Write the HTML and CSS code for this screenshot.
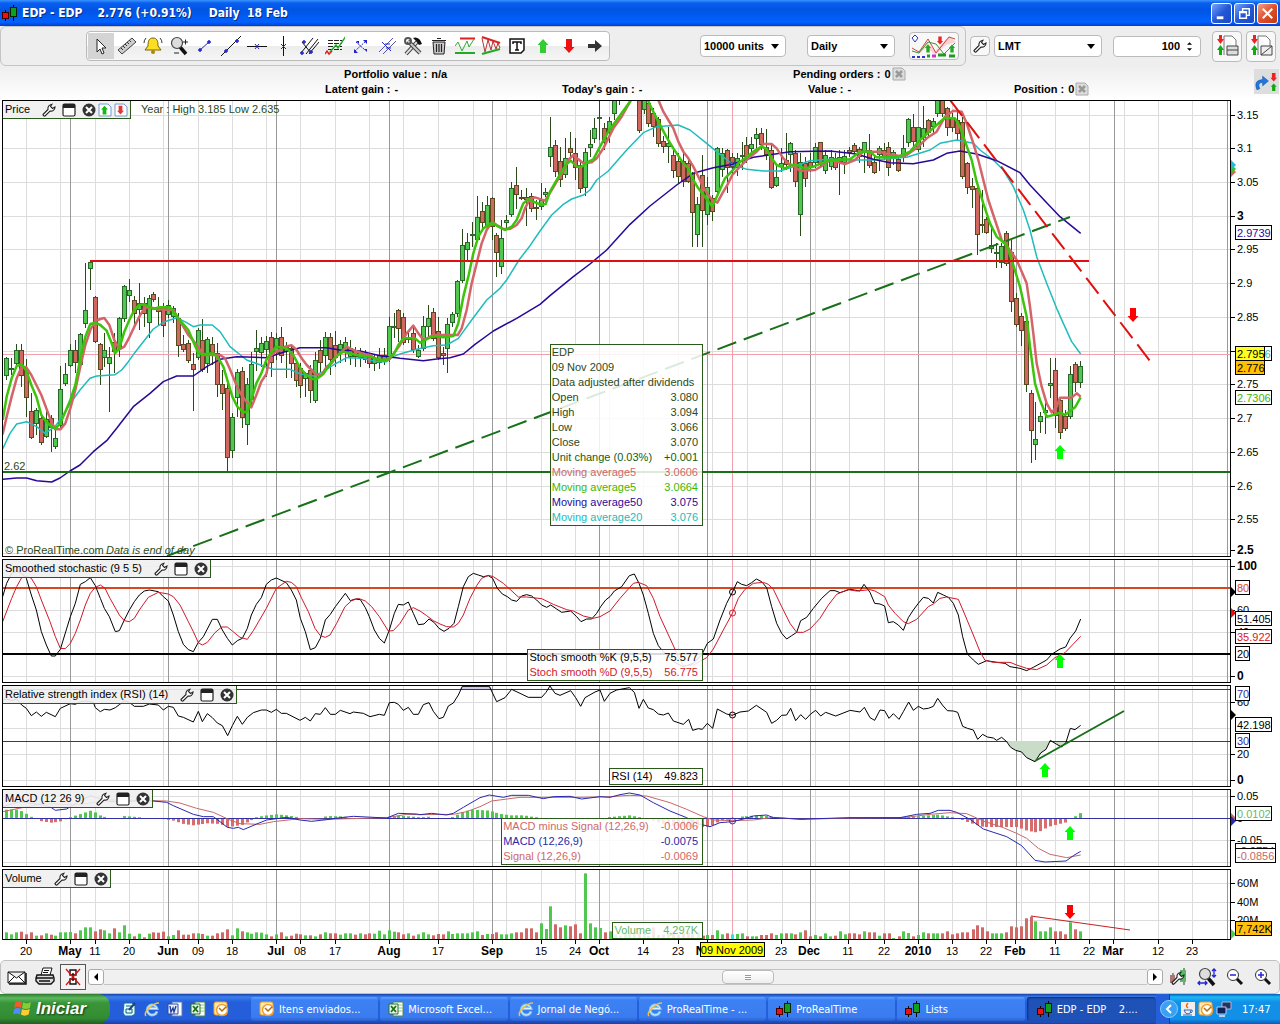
FILE: index.html
```html
<!DOCTYPE html>
<html lang="en">
<head>
<meta charset="utf-8">
<title>EDP - EDP 2.776 (+0.91%) Daily 18 Feb</title>
<link rel="stylesheet" href="styles.css">
</head>
<body>
<svg class="sprite" aria-hidden="true">
  <symbol id="logo" viewBox="0 0 16 16"><path d="M3.500 5v11M11.500 0v16" stroke="#000"/><rect x=".5" y="7.500" width="6" height="6" fill="#f01010" stroke="#400"/><rect x="8.500" y="2.500" width="6" height="9" fill="#10a020" stroke="#020"/></symbol>
  <symbol id="wrench" viewBox="0 0 14 14"><path d="M1 11.500 6 6.500C5.500 4 7 1.500 10 1.200L8.500 3.500 10.500 5.500 13 4C13 7 10.500 8.600 8 8L3 13Q1.500 13.500 1 11.500Z" fill="#fff" stroke="#222" stroke-width="1.100"/></symbol>
  <symbol id="window" viewBox="0 0 14 14"><rect x="1" y="1" width="12" height="12" rx="1.500" fill="#fff" stroke="#222" stroke-width="1.200"/><path d="M1 1h12v4H1z" fill="#222"/></symbol>
  <symbol id="close" viewBox="0 0 14 14"><circle cx="7" cy="7" r="6.500" fill="#333"/><path d="m4 4 6 6m0-6-6 6" stroke="#fff" stroke-width="2"/></symbol>
  <symbol id="up" viewBox="0 0 12 16"><path d="M6 1 11.500 7H9v8H3V7H.5z"/></symbol>
  <symbol id="down" viewBox="0 0 12 16"><path d="M6 15 11.500 9H9V1H3v8H.5z"/></symbol>
  <symbol id="graybox" viewBox="0 0 14 14"><path d="M1 1h9l3 3v9H1z" fill="#ddd" stroke="#aaa"/><path d="m4 4 6 6m0-6-6 6" stroke="#999" stroke-width="2.500"/></symbol>
  <symbol id="ie" viewBox="0 0 16 16"><path d="M13 10.500A5 5 0 1 1 13 7.500H4" fill="none" stroke="#7ac4f8" stroke-width="2.800"/><path d="M13 10.500A5 5 0 1 1 13 7.500H4" fill="none" stroke="#d8f0ff" stroke-width="1"/><path d="M2 15C-1 12 8 2 15 2" fill="none" stroke="#f0c040" stroke-width="1.500"/></symbol>
  <symbol id="excel" viewBox="0 0 16 16"><path d="M5 1h10v14H5z" fill="#fff" stroke="#4a8a4a"/><path d="M9 4h5M9 7h5M9 10h5" stroke="#8c8"/><path d="M1 3h9v10H1z" fill="#e8f4e8" stroke="#287028"/><path d="m3 5 5 6m0-6-5 6" stroke="#187018" stroke-width="1.800"/></symbol>
  <symbol id="outlook" viewBox="0 0 16 16"><rect x="1" y="1" width="13" height="13" rx="2" fill="#ffe9b0" stroke="#f0a030"/><circle cx="9" cy="9" r="5.500" fill="#fff" stroke="#f0a030" stroke-width="1.500"/><path d="m6 7 3 3 4-4" fill="none" stroke="#b07010" stroke-width="1.500"/></symbol>
  <symbol id="word" viewBox="0 0 16 16"><path d="M5 1h10v14H5z" fill="#fff" stroke="#5a7ac0"/><path d="M1 3h10v10H1z" fill="#e8eefc" stroke="#2a4a9a"/><path d="m3 5 1 6 2-4 1 4 2-6" fill="none" stroke="#2040a0" stroke-width="1.400"/></symbol>
  <symbol id="lens" viewBox="0 0 20 20"><path d="m11 11 6 7" stroke="#111" stroke-width="3.500"/><circle cx="8" cy="7" r="5.500" fill="#ddd" stroke="#444" stroke-width="1.200"/></symbol>
  <symbol id="page-orders" viewBox="0 0 24 24"><path d="M9 2h8l4 4v8M9 2v19" fill="#fff" stroke="#777"/><path d="M4 1h3v4h2l-3.500 5L2 5h2z" fill="#e22"/><path d="M4 21h3v-5h2l-3.500-5L2 16h2z" fill="#1a1"/></symbol>
</svg>

<header class="titlebar">
  <svg class="i16"><use href="#logo"/></svg>
  <h1>EDP - EDP<span class="quote">2.776 (+0.91%)</span><span class="period">Daily&nbsp; 18 Feb</span></h1>
  <div class="window-controls">
    <button aria-label="Minimise"><svg viewBox="0 0 20 20"><path d="M5 14.500h7" stroke="#fff" stroke-width="3"/></svg></button>
    <button aria-label="Restore"><svg viewBox="0 0 20 20"><path d="M8 8V5h7v7h-3M5 8h7v7H5zM5 9h7" fill="none" stroke="#fff" stroke-width="1.500"/></svg></button>
    <button class="quit" aria-label="Close"><svg viewBox="0 0 20 20"><path d="m5 5 10 10m0-10L5 15" stroke="#fff" stroke-width="2.200"/></svg></button>
  </div>
</header>

<div class="toolbar">
  <div class="tool-group">
    <div class="tools">
      <button class="pressed" aria-label="Select"><svg viewBox="0 0 20 20"><path d="M6 3v13l3-3 2 5 2-1-2-5h4z" fill="#fff" stroke="#222"/></svg></button>
      <button aria-label="Ruler"><svg viewBox="0 0 20 20"><path d="m1 14 14-12 4 4L5 18z" fill="#ccc" stroke="#444"/><path d="m4 12 2 2m0-4 2 2m0-4 2 2m0-4 2 2m0-4 2 2" stroke="#333"/></svg></button>
      <button aria-label="Alert"><svg viewBox="0 0 20 20"><path d="M10 2c4 0 5 3 5 8l3 4H2l3-4c0-5 1-8 5-8z" fill="#fd2" stroke="#760"/><circle cx="10" cy="16" r="2" fill="#a80"/><path d="M3 2Q1 4 1 7M17 2q2 2 2 5" fill="none" stroke="#333"/></svg></button>
      <button aria-label="Zoom"><svg viewBox="0 0 20 20"><use href="#lens"/><path d="M14 6h5m-2.500-2.500v5M5 17h5" stroke="#222"/></svg></button>
      <button aria-label="Segment"><svg viewBox="0 0 20 20"><path d="m5 14 9-8" stroke="#22c"/><path d="M3 14h4m-2-2v4m7-10h4m-2-2v4" stroke="#22c" stroke-width="1.500"/></svg></button>
      <button aria-label="Line"><svg viewBox="0 0 20 20"><path d="M0 20 20 0" stroke="#111"/><path d="M3 15h4m-2-2v4m9-12h4m-2-2v4" stroke="#22c" stroke-width="1.500"/></svg></button>
      <button aria-label="Horizontal line"><svg viewBox="0 0 20 20"><path d="M0 10.500h20" stroke="#111"/><path d="m8 8 4 5m0-5-4 5" stroke="#22c"/></svg></button>
      <button aria-label="Vertical line"><svg viewBox="0 0 20 20"><path d="M10.500 0v20" stroke="#111"/><path d="m8 8 5 5m0-5-5 5" stroke="#22c"/></svg></button>
      <button aria-label="Pitchfork"><svg viewBox="0 0 20 20"><path d="M2 17 14 2M7 18 19 3M10 18 20 6M3 6l9 11" stroke="#111"/><path d="M1 17h4m-2-2v4m7-3h4m-2-2v4M3 6h4M5 4v4" stroke="#22c" stroke-width="1.500"/></svg></button>
      <button aria-label="Fibonacci"><svg viewBox="0 0 20 20"><path d="M3 4.500h14M3 7.500h14M3 10.500h14M3 13.500h14" stroke="#222" stroke-dasharray="5 1"/><path d="M5 16 11 9l2 3 8-12" fill="none" stroke="#2a2" stroke-width="1.500"/><path d="m0 18 2-3 2 3 3-3" fill="none" stroke="#d22" stroke-width="1.500"/></svg></button>
      <button aria-label="Move points"><svg viewBox="0 0 20 20"><path d="m5 6 9 8M4 15 15 5" stroke="#22c" stroke-dasharray="2 1"/><path d="M3 13v4h4zM12 4h4v4zM5 5h3v3zm8 8h3v3z" fill="#22c"/></svg></button>
      <button aria-label="Parallel lines"><svg viewBox="0 0 20 20"><path d="M2 16 16 2M6 18 19 5" stroke="#55a"/><path d="m5 6 9 9m-6-7h5M9 12h5" stroke="#22c"/></svg></button>
      <button aria-label="Tools"><svg viewBox="0 0 20 20"><path d="m3 18 11-12" stroke="#333" stroke-width="4"/><path d="m3 18 11-12" stroke="#ddd" stroke-width="2"/><path d="M10 2q6-2 9 6l-3 1-3-4z" fill="#111"/><path d="m5 5 12 12" stroke="#444" stroke-width="4"/><path d="m5 5 12 12" stroke="#ccc" stroke-width="2"/><circle cx="5" cy="5" r="3" fill="none" stroke="#555" stroke-width="2"/></svg></button>
      <button aria-label="Delete"><svg viewBox="0 0 20 20"><path d="M4 6h12l-1 12H5z" fill="#ccc" stroke="#222"/><path d="M3 4.500h14M8 2.500h4M7.500 8v8m2.500-8v8m2.500-8v8" stroke="#222" stroke-width="1.200"/></svg></button>
      <button aria-label="Support and resistance"><svg viewBox="0 0 20 20"><path d="M5 2.500h15" stroke="#d22" stroke-width="2"/><path d="M0 17h20" stroke="#2a2" stroke-width="2"/><path d="m0 10 3-4 4 9 5-10 2 6 5-8" fill="none" stroke="#3a3"/></svg></button>
      <button aria-label="Triangle patterns"><svg viewBox="0 0 20 20"><path d="m1 1 18 6" stroke="#d22" stroke-width="2"/><path d="m1 18 18-5" stroke="#2a2" stroke-width="2"/><path d="m1 2 3 14 3-12 3 10 2-9 3 8 2-6 2 5" fill="none" stroke="#b33"/></svg></button>
      <button aria-label="Text"><svg viewBox="0 0 20 20"><path d="M3 3h14v11l-3 3H3z" fill="#fff" stroke="#111" stroke-width="1.500"/><path d="M6 8V6h8v2M10 6v8M8 14h4" fill="none" stroke="#111" stroke-width="1.500"/></svg></button>
      <button aria-label="Up arrow"><svg viewBox="0 0 20 20"><use href="#up" x="4" y="2" width="12" height="16" fill="#3c3"/></svg></button>
      <button aria-label="Down arrow"><svg viewBox="0 0 20 20"><use href="#down" x="4" y="2" width="12" height="16" fill="#e11"/></svg></button>
      <button aria-label="Right arrow"><svg viewBox="0 0 20 20"><path d="M3 8h7V4l7 6-7 6v-4H3z" fill="#333"/></svg></button>
    </div>
    <label class="pick units"><select aria-label="History"><option>10000 units</option></select></label>
    <label class="pick daily"><select aria-label="Timeframe"><option>Daily</option></select></label>
    <button class="framed indicators" aria-label="Indicators"><svg viewBox="0 0 46 24"><path d="M1 16 7 19 16 8l8 9L38 2l7 6-10 3-11 10-8-8-8 7z" fill="#fbb" opacity=".6"/><path d="m1 14 7 4 9-13 8 14L38 3l6 2" fill="none" stroke="#c44"/><path d="m1 17 7 2 9-11 8 2 8 10L44 9" fill="none" stroke="#393"/><path d="m4 1 3 3-3 4-3-4z" fill="#fff" stroke="#33c"/><path d="M1 23h3m2 0h3m2 0h3" stroke="#33c" stroke-width="2"/><path d="M16 22h3m8-1h8m3 1h6" stroke="#292" stroke-width="3"/><path d="M21 22h4" stroke="#c3c" stroke-width="3"/><use href="#up" x="13" y="10" width="8" height="9" fill="#2a2"/><use href="#down" x="25" y="2" width="8" height="9" fill="#e22"/><use href="#up" x="37" y="10" width="8" height="9" fill="#2a2"/></svg></button>
  </div>
  <button class="framed settings" aria-label="Order settings"><svg><use href="#wrench"/></svg></button>
  <label class="pick order"><select aria-label="Order type"><option>LMT</option></select></label>
  <label class="quantity"><input type="text" value="100" aria-label="Quantity"><svg viewBox="0 0 6 10"><path d="m0 3 3-3 3 3zM0 7l3 3 3-3z"/></svg></label>
  <button class="framed ticket" aria-label="Order list"><svg viewBox="0 0 24 24"><use href="#page-orders"/><path d="M12 12h11v9H12zM12 16h11" fill="#ddd" stroke="#444"/></svg></button>
  <button class="framed ticket" aria-label="Order by line"><svg viewBox="0 0 24 24"><use href="#page-orders"/><path d="M12 12h11v9H12zM12 21 23 12" fill="#eee" stroke="#444"/></svg></button>
</div>

<section class="account">
  <dl>
    <div class="wide"><dt>Portfolio value :</dt><dd>n/a</dd></div><div></div>
    <div><dt>Pending orders :</dt><dd>0</dd><svg class="i14"><use href="#graybox"/></svg></div><div></div>
    <div><dt>Latent gain :</dt><dd>-</dd></div><div><dt>Today's gain :</dt><dd>-</dd></div>
    <div class="mid"><dt>Value :</dt><dd>-</dd></div><div><dt>Position :</dt><dd>0</dd><svg class="i14"><use href="#graybox"/></svg></div>
  </dl>
  <button class="send" aria-label="Trade from chart"><svg viewBox="0 0 26 24"><path d="M3 20Q-1 10 9 9.500V6l6 5-6 5v-3.500q-6 0-3 6.500z" fill="#27d" stroke="#15a" stroke-width=".6"/><use href="#down" x="16" y="2" width="9" height="10" fill="#e22"/><use href="#up" x="16" y="13" width="9" height="9" fill="#1a1"/></svg></button>
</section>

<main class="charts">
  <section class="row price" data-top="100">
    <div class="plot"><svg class="draw"></svg>
      <div class="head"><h2>Price</h2><button aria-label="Settings"><svg><use href="#wrench"/></svg></button><button aria-label="Maximise"><svg><use href="#window"/></svg></button><button aria-label="Close"><svg><use href="#close"/></svg></button><button class="tight" aria-label="Buy"><svg viewBox="0 0 14 14"><path d="M1 1h9l3 3v9H1z" fill="#fff" stroke="#79c"/><use href="#up" x="2" y="2" width="9" height="10" fill="#1b1"/></svg></button><button class="tight" aria-label="Sell"><svg viewBox="0 0 14 14"><path d="M1 1h9l3 3v9H1z" fill="#fff" stroke="#79c"/><use href="#down" x="2" y="2" width="9" height="10" fill="#e33"/></svg></button></div>
      <div class="lane"><table class="tip">
        <tr><td colspan="2">EDP</td></tr><tr><td colspan="2">09 Nov 2009</td></tr><tr><td colspan="2">Data adjusted after dividends</td></tr>
        <tr><td>Open</td><td>3.080</td></tr><tr><td>High</td><td>3.094</td></tr><tr><td>Low</td><td>3.066</td></tr><tr><td>Close</td><td>3.070</td></tr>
        <tr class="green"><td>Unit change (0.03%)</td><td>+0.001</td></tr><tr class="rose"><td>Moving average5</td><td>3.0606</td></tr><tr class="lime"><td>Moving average5</td><td>3.0664</td></tr><tr class="navy"><td>Moving average50</td><td>3.075</td></tr><tr class="cyan"><td>Moving average20</td><td>3.076</td></tr>
      </table></div>
    </div><svg class="axis"></svg>
  </section>
  <section class="row stoch" data-top="559">
    <div class="plot"><svg class="draw"></svg>
      <div class="head"><h2>Smoothed stochastic (9 5 5)</h2><button aria-label="Settings"><svg><use href="#wrench"/></svg></button><button aria-label="Maximise"><svg><use href="#window"/></svg></button><button aria-label="Close"><svg><use href="#close"/></svg></button></div>
      <div class="lane"><table class="tip"><tr class="black"><td>Stoch smooth %K (9,5,5)</td><td>75.577</td></tr><tr class="red"><td>Stoch smooth %D (9,5,5)</td><td>56.775</td></tr></table></div>
    </div><svg class="axis"></svg>
  </section>
  <section class="row rsi" data-top="685">
    <div class="plot"><svg class="draw"></svg>
      <div class="head"><h2>Relative strength index (RSI) (14)</h2><button aria-label="Settings"><svg><use href="#wrench"/></svg></button><button aria-label="Maximise"><svg><use href="#window"/></svg></button><button aria-label="Close"><svg><use href="#close"/></svg></button></div>
      <div class="lane"><table class="tip"><tr class="black"><td>RSI (14)</td><td>49.823</td></tr></table></div>
    </div><svg class="axis"></svg>
  </section>
  <section class="row macd" data-top="789">
    <div class="plot"><svg class="draw"></svg>
      <div class="head"><h2>MACD (12 26 9)</h2><button aria-label="Settings"><svg><use href="#wrench"/></svg></button><button aria-label="Maximise"><svg><use href="#window"/></svg></button><button aria-label="Close"><svg><use href="#close"/></svg></button></div>
      <div class="lane"><table class="tip"><tr class="rose"><td>MACD minus Signal (12,26,9)</td><td>-0.0006</td></tr><tr class="blue"><td>MACD (12,26,9)</td><td>-0.0075</td></tr><tr class="rose"><td>Signal (12,26,9)</td><td>-0.0069</td></tr></table></div>
    </div><svg class="axis"></svg>
  </section>
  <section class="row volume" data-top="869">
    <div class="plot"><svg class="draw"></svg>
      <div class="head"><h2>Volume</h2><button aria-label="Settings"><svg><use href="#wrench"/></svg></button><button aria-label="Maximise"><svg><use href="#window"/></svg></button><button aria-label="Close"><svg><use href="#close"/></svg></button></div>
      <div class="lane"><table class="tip"><tr class="mint"><td>Volume</td><td>4,297K</td></tr></table></div>
    </div><svg class="axis"></svg>
  </section>
  <svg class="dates"></svg>
</main>

<footer class="scrollbar">
  <button aria-label="Mail"><svg viewBox="0 0 20 20"><path d="M1 5h17v11H1zM1 5l8.500 6L18 5M1 16l6-6m11 6-6-6" fill="#fff" stroke="#111"/><path d="M2 17h17V6" fill="none" stroke="#111" stroke-width="1.500"/></svg></button>
  <button aria-label="Print"><svg viewBox="0 0 20 20"><path d="M6 8 8 1h9l-2 7" fill="#fff" stroke="#111"/><path d="M9 3.500h5M8 5.500h5" stroke="#111"/><path d="M2 8h16l1 3v3l-3 3H4l-3-3v-3z" fill="#ddd" stroke="#111" stroke-width="1.400"/><path d="M1 11h17M4 14h11" stroke="#111" stroke-width="1.500"/></svg></button>
  <button class="unlink" aria-label="Unlink charts"><svg viewBox="0 0 20 20"><path d="M7 3h6v5H7zM7 12h6v5H7zM10 6v8" fill="#fff" stroke="#111" stroke-width="1.400"/><path d="m3 2 14 16M17 2 3 18" stroke="#d11" stroke-width="1.300"/></svg></button>
  <button class="step" aria-label="Scroll left"><svg viewBox="0 0 10 10"><path d="M7 1v8L3 5z"/></svg></button>
  <input type="range" min="0" max="1000" value="624" aria-label="Scroll history">
  <button class="step" aria-label="Scroll right"><svg viewBox="0 0 10 10"><path d="M3 1v8l4-4z"/></svg></button>
  <div class="zooms">
    <button aria-label="Chart style"><svg viewBox="0 0 20 20"><path d="M4 6v12M15 1v17" stroke="#333"/><path d="M1 8h5v8H1z" fill="#a77"/><path d="M11 3h6v12h-6z" fill="#5b6"/><use href="#wrench" x="2" y="4" width="14" height="14"/></svg></button>
    <button aria-label="Zoom to fit"><svg viewBox="0 0 20 20"><use href="#lens"/><path d="M1 16h9M3 14l-2 2 2 2m5-4 2 2-2 2M17 2v8m-2-6 2-2 2 2m-4 4 2 2 2-2" fill="none" stroke="#22d" stroke-width="1.300"/></svg></button>
    <button aria-label="Zoom out"><svg viewBox="0 0 20 20"><path d="m11 11 6 6" stroke="#111" stroke-width="3"/><circle cx="8" cy="8" r="5.500" fill="#fff" stroke="#333"/><path d="M5 8h6" stroke="#22d" stroke-width="1.500"/></svg></button>
    <button aria-label="Zoom in"><svg viewBox="0 0 20 20"><path d="m11 11 6 6" stroke="#111" stroke-width="3"/><circle cx="8" cy="8" r="5.500" fill="#fff" stroke="#333"/><path d="M5 8h6M8 5v6" stroke="#22d" stroke-width="1.500"/></svg></button>
  </div>
</footer>

<nav class="taskbar">
  <button class="start"><svg viewBox="0 0 18 18"><path d="M3 3q3-2 6 0L8 8Q5 6 2 8z" fill="#f25a28"/><path d="M10 3q3 2 7 0l-1 5q-4 2-7 0z" fill="#8c3"/><path d="M2 9q3-2 6 0l-1 5q-3-2-6 0z" fill="#58f"/><path d="M9 9q3 2 7 0l-1 5q-4 2-7 0z" fill="#fc3"/></svg>Iniciar</button>
  <div class="quick">
    <button aria-label="Desktop"><svg viewBox="0 0 16 16"><path d="M3 2h8l3 3v8l-3 2H4l-2-3z" fill="#dff" stroke="#269"/><path d="M5 5h6M5 8h6v4H5z" fill="none" stroke="#158"/><path d="m8 9 6-7" stroke="#247" stroke-width="2"/></svg></button>
    <button aria-label="Internet Explorer"><svg><use href="#ie"/></svg></button>
    <button aria-label="Word"><svg><use href="#word"/></svg></button>
    <button aria-label="Excel"><svg><use href="#excel"/></svg></button>
    <button aria-label="Outlook"><svg><use href="#outlook"/></svg></button>
  </div>
  <div class="tasks">
    <button><svg><use href="#outlook"/></svg>Itens enviados...</button>
    <button><svg><use href="#excel"/></svg>Microsoft Excel...</button>
    <button><svg><use href="#ie"/></svg>Jornal de Negó...</button>
    <button><svg><use href="#ie"/></svg>ProRealTime - ...</button>
    <button><svg><use href="#logo"/></svg>ProRealTime</button>
    <button><svg><use href="#logo"/></svg>Lists</button>
    <button class="current"><svg><use href="#logo"/></svg>EDP - EDP &nbsp;&nbsp; 2....</button>
  </div>
  <div class="tray">
    <button class="expand" aria-label="Show hidden icons"><svg viewBox="0 0 18 18"><circle cx="9" cy="9" r="8.500" fill="#3aa0f4" stroke="#8cf"/><path d="m11 5-4 4 4 4" fill="none" stroke="#fff" stroke-width="2"/></svg></button>
    <svg viewBox="0 0 16 16"><rect x="1" y="1" width="14" height="14" fill="#eee"/><path d="M4 9h7q0 4-3 4T4 9zm7 0q3 0 0 3M3 14h9" fill="none" stroke="#36a"/><path d="M8 2q-3 3 0 5" fill="none" stroke="#e60" stroke-width="1.500"/></svg>
    <svg><use href="#outlook"/></svg>
    <svg viewBox="0 0 16 16"><path d="M6 1h9v7H6z" fill="#236" stroke="#abd"/><path d="M1 6h9v7H1z" fill="#125" stroke="#bce"/><path d="M3 15h6" stroke="#bce" stroke-width="2"/></svg>
    <time>17:47</time>
  </div>
</nav>
<script src="charts.js"></script>
</body>
</html>
```
FILE: styles.css
```css
* { box-sizing: border-box; }
body { margin: 0; min-height: 100vh; display: flex; flex-direction: column; background: #fff; color: #000; font: 11px/15px "Liberation Sans", Arial, sans-serif; }
button { border: 0; padding: 0; background: none; font: inherit; color: inherit; display: flex; align-items: center; justify-content: center; }
h1, h2, dl, dd { margin: 0; font: inherit; }
svg { display: block; flex: none; }
.sprite { position: absolute; width: 0; height: 0; }
.i16 { width: 16px; height: 16px; }
.i14 { width: 14px; height: 14px; }

.titlebar { height: 26px; display: flex; align-items: center; gap: 4px; padding: 0 2px; background: linear-gradient(#3a95ff 0, #0a5ff0 3px, #0054e3 10px, #0062ff 22px, #003dd0 26px); color: #fff; }
.titlebar h1 { flex: 1; font: bold 12px/16px "DejaVu Sans Condensed", "DejaVu Sans", sans-serif; text-shadow: 1px 1px #0a2a80; }
.quote { margin-left: 15px; }
.period { margin-left: 17px; }
.window-controls { display: flex; gap: 2px; }
.window-controls button { width: 21px; height: 21px; border: 1px solid #fff; border-radius: 3px; background: linear-gradient(135deg, #7aa4f8, #2458d8 50%, #1c48c0); }
.window-controls .quit { background: linear-gradient(135deg, #f0a088, #e0502c 50%, #c03810); }

.toolbar { height: 40px; display: flex; align-items: center; gap: 4px; padding-right: 4px; background: #eee; }
.tool-group { flex: 1; height: 40px; display: flex; align-items: center; padding: 0 6px 0 85px; border: 1px solid #c4c4c4; border-radius: 6px; }
.tools { display: flex; height: 30px; padding: 1px; border: 1px solid #bbb; border-radius: 4px; background: linear-gradient(#fff 50%, #ececec 50%, #f6f6f6); }
.tools button { width: 26px; height: 26px; }
.tools svg { width: 20px; height: 20px; }
.tools .pressed { background: #d4d4d4; }
.pick select { appearance: none; width: 100%; height: 22px; padding: 0 3px; border: 1px solid #bbb; border-radius: 4px; background: #fff; color: #000; font: bold 11px/15px "Liberation Sans", Arial, sans-serif; }
.pick { display: grid; align-items: center; }
.pick > *, .pick::after { grid-area: 1 / 1; }
.pick::after { content: ""; justify-self: end; margin-right: 7px; border: 4px solid transparent; border-top: 5px solid #000; border-bottom: 0; pointer-events: none; }
.units { width: 86px; margin-left: auto; }
.daily { width: 88px; margin: 0 14px 0 21px; }
.order { width: 108px; }
.framed { border: 1px solid #bbb; border-radius: 4px; background: #f8f8f8; }
.indicators { width: 50px; height: 28px; }
.indicators svg { width: 46px; height: 24px; }
.settings { width: 20px; height: 20px; }
.settings svg { width: 14px; height: 14px; }
.quantity { display: flex; align-items: center; width: 88px; height: 21px; margin: 0 7px; padding-right: 8px; border: 1px solid #bbb; border-radius: 4px; background: #fff; }
.quantity input { width: 100%; min-width: 0; border: 0; padding: 0 7px; background: none; text-align: right; font: bold 11px/15px "Liberation Sans", Arial, sans-serif; }
.quantity svg { width: 5px; height: 9px; }
.ticket { width: 30px; height: 31px; }
.ticket svg { width: 24px; height: 24px; }

.account { height: 34px; padding-top: 1px; position: relative; background: linear-gradient(#eee, #fff); font-weight: bold; }
.account dl { display: grid; grid-template-columns: 237fr 231fr 221fr 266fr; grid-auto-rows: 15px; padding-left: 25.400%; }
.account dl > div { display: flex; gap: 4px; white-space: nowrap; }
.account .i14 { margin-left: -3px; }
.account .wide { padding-left: 19px; }
.account .mid { padding-left: 15px; }
.send { position: absolute; right: 1px; top: 3px; width: 25px; height: 25px; background: #ddd; }
.send svg { width: 25px; height: 24px; }

.charts { flex: 1; display: flex; flex-direction: column; gap: 2px; padding-left: 2px; }
.row { display: grid; grid-template: minmax(0, 1fr) / minmax(0, 1fr) 49px; }
.price { height: 457px; }
.stoch { height: 124px; }
.rsi { height: 102px; }
.macd { height: 78px; }
.volume { height: 71px; }
.plot { position: relative; border: 1px solid #000; overflow: hidden; }
.draw { width: 100%; height: 100%; }
.axis { width: 49px; height: 100%; overflow: visible; }
.dates { width: 100%; height: 20px; margin-top: -2px; overflow: visible; }
.head { position: absolute; left: 0; top: 0; height: 18px; display: flex; align-items: center; padding: 0 2px; border: solid #2a5a1a; border-width: 0 1px 1px 0; background: rgba(240, 240, 240, .9); }
.head h2 { margin-right: 4px; }
.head button { width: 14px; margin-left: 6px; }
.head h2 + button { margin-left: 8px; }
.head .tight { margin-left: 2px; }
.head svg { width: 14px; height: 14px; }
.lane { position: absolute; left: 0; bottom: 1px; width: 700px; display: flex; justify-content: flex-end; }
.price .lane { bottom: 30px; }
.volume .lane { bottom: 0; }
.tip { border: 1px solid #2a5a1a; border-spacing: 0; background: rgba(255, 255, 255, .85); color: #2a4a1a; white-space: nowrap; }
.price .tip { width: 152px; }
.tip td { padding: 0 4px 0 1px; height: 15px; line-height: 15px; }
.tip td + td { padding-left: 8px; text-align: right; }
.green { color: #106010; } .rose { color: #d06868; } .lime { color: #3cb800; } .navy { color: #2a0a9a; }
.cyan { color: #20bcbc; } .black { color: #000; } .red { color: #d02030; } .blue { color: #2828a8; } .mint { color: #68b868; }
.lbl { font-size: 11px; }
.lbl-b { font-size: 12px; font-weight: bold; }
.crisp { shape-rendering: crispEdges; }

.scrollbar { height: 34px; display: flex; align-items: center; padding: 0 6px; border: 1px solid #c0c0c0; border-radius: 5px; background: #eee; }
.scrollbar button { flex: none; width: 20px; height: 26px; margin-right: 8px; }
.scrollbar svg { width: 20px; height: 20px; }
.scrollbar .unlink { width: 26px; margin: 0 2px 0 -3px; border: 1px solid #555; background: #f4f4f4; }
.scrollbar .step { width: 16px; height: 16px; margin: 0; border: 1px solid #aaa; border-radius: 3px; background: #fff; }
.scrollbar .step svg { width: 10px; height: 10px; }
.scrollbar input { appearance: none; flex: 1; height: 16px; margin: 0; border: solid #c4c4c4; border-width: 1px 0; background: #f0f0f0; }
.scrollbar input::-webkit-slider-thumb { appearance: none; width: 52px; height: 14px; border: 1px solid #bbb; border-radius: 4px; background: repeating-linear-gradient(#999 0 1px, #fff 1px 2px) center / 6px 5px no-repeat, linear-gradient(#fff, #eee); }
.zooms { display: flex; gap: 8px; padding-left: 6px; }
.zooms button { margin: 0; }

.taskbar { height: 30px; display: flex; align-items: center; background: linear-gradient(#1941a5 0, #3a80f0 3px, #245edb 8px, #245edb 25px, #1941a5); color: #fff; font: 11px/15px "DejaVu Sans Condensed", "DejaVu Sans", sans-serif; }
.start { width: 110px; height: 30px; gap: 4px; padding-right: 12px; border-radius: 0 12px 12px 0; background: linear-gradient(#2f7a2f 0, #5cb85c 4px, #3a953a 9px, #338c33 24px, #205f20); font: italic bold 17px/20px "Liberation Sans", Arial, sans-serif; text-shadow: 1px 1px 2px #143c14; }
.start svg { width: 20px; height: 20px; }
.quick { width: 141px; display: flex; gap: 7px; padding-left: 11px; }
.quick svg, .tasks svg, .tray > svg { width: 16px; height: 16px; }
.tasks { flex: 1; display: flex; gap: 2px; min-width: 0; }
.tasks button { flex: 1 1 0; min-width: 0; height: 24px; justify-content: flex-start; gap: 4px; padding-left: 8px; border-radius: 3px; background: linear-gradient(#60a0ff 0, #3c81f3 3px, #3a7cf0 20px, #2a60cc); white-space: nowrap; overflow: hidden; }
.tasks .current { background: #1e52b7; box-shadow: inset 1px 1px 2px #0c2f7c; padding-left: 10px; }
.tray { width: 124px; height: 30px; display: flex; align-items: center; gap: 2px; padding-left: 4px; background: linear-gradient(90deg, transparent 13px, #0b3f98 13px 14px, transparent 14px), linear-gradient(90deg, #245edb 13px, transparent 13px), linear-gradient(#0c59b9 0, #19b9f3 3px, #1290e8 8px, #1290e8 25px, #0c59b9); }
.expand svg { width: 18px; height: 18px; }
.tray time { margin-left: 8px; }
```
FILE: charts.js
```js
// Series are stored at three units per pixel, in sections; each section names its own origin.
const PRICE_Y = 100, LOWER_Y = 555;

const CANDLES = [
  [0, `g20,770,775,829,840 g35,775,803,811,825 g50,733,751,793,800 r65,733,751,828,860 r79,778,810,895,950 r94,880,934,1015,1017 g109,925,931,972,1005 r124,940,955,1030,1035 g139,918,958,1012,1015 r154,945,955,985,1055 g166,980,1015,1042,1047 g181,798,868,978,985 g196,790,823,853,858 g211,732,751,799,802 r226,720,751,790,820 g241,698,703,795,800 g256,490,631,673,683 g271,482,486,508,570 r286,588,590,727,730 r301,730,731,811,854 g313,700,751,775,800 g328,742,772,793,936 r343,700,725,755,820 g358,650,655,742,770 g373,555,559,658,665 g388,537,571,589,605 r403,588,601,643,680 g418,548,610,630,690 r433,590,610,643,680 g448,585,595,670,715 r460,575,583,601,606 r475,590,622,637,675 r490,608,620,679,712 g505,600,616,646,655 g520,618,625,650,670 r535,640,655,739,770 r550,705,733,751,755 r565,720,730,784,790 r580,760,793,811,932 g595,685,691,775,780 r607,658,721,811,815 g622,712,718,793,820 r637,712,733,760,795 r652,730,760,856,890 r667,810,853,883,930 r682,850,865,1075,1115 g697,940,952,1054,1075 g712,808,817,895,950 r727,800,814,955,985 g742,835,853,976,1035 g754,755,793,900,925 g769,690,745,757,812 g784,710,730,760,800 g799,708,724,751,830 r814,695,712,790,830 g829,700,715,760,780 r844,682,712,769,790 g859,725,740,755,835 r874,735,745,793,835 r889,780,790,844,862 r901,790,805,859,893 g916,815,820,838,892 r931,795,811,874,908 g946,755,781,904,908 r961,720,751,790,818 g976,695,712,769,800 r991,700,712,781,825 r1006,692,736,775,800 g1021,720,733,760,790 g1036,712,727,755,785 g1051,720,745,770,795 r1066,740,750,772,800 g1081,745,755,775,800 r1096,750,760,780,790 r1108,760,770,793,805 g1123,765,775,793,812 g1138,745,765,790,808 g1153,745,765,780,795 g1168,652,679,770,785 g1183,640,677,683,715 r1195,628,631,688,725`],
  [400, `r10,640,652,730,735 g25,690,710,721,730 r40,680,700,751,760 g55,735,751,772,775 g70,648,677,748,752 g85,615,655,682,718 r101,625,637,718,722 r116,650,694,775,780 r131,740,760,769,795 g143,655,673,748,818 g158,635,643,670,680 g173,540,544,643,650 g188,387,434,544,550 g203,400,427,451,487 g218,367,403,409,440 g233,288,352,421,425 r248,305,334,370,385 g263,288,316,382,390 r278,290,295,382,420 r290,400,406,460,530 g305,360,415,502,522 g319,345,361,370,388 g334,245,265,346,352 r349,202,256,286,328 r364,270,291,295,300 r379,265,291,300,378 r394,280,287,328,335 r409,300,322,328,360 g424,250,300,320,330 g437,265,277,286,290 g452,52,142,172,200 r467,120,136,217,230 r482,140,184,240,262 g497,115,175,225,235 r512,97,145,160,175 r527,115,160,205,240 r541,180,195,268,278 g556,145,157,265,287 g571,90,133,145,170 g584,55,85,118,130 g599,-5,50,54,120 r614,70,85,130,150 g629,50,64,100,130 g644,-10,-10,43,60 g659,-30,-20,-10,15 g674,-30,-20,-10,-5 g688,-30,-20,-10,-5 g703,-30,-20,-10,-5 r718,-10,-10,94,100 g732,-10,-10,30,43 r745,-10,10,73,80 r760,25,40,80,110 r775,50,58,133,140 r790,108,124,142,160 g805,80,130,140,190 r820,150,166,214,235 r835,160,184,232,250 r850,160,184,247,260 r865,170,190,247,250 r877,215,220,340,440 g892,290,313,406,440 r907,165,226,334,440 g922,230,262,346,375 r937,285,295,337,363 g952,140,145,277,290 g967,143,160,210,230 r982,148,150,205,278 r997,160,170,200,230 g1012,160,175,205,228 g1027,125,165,170,210 r1040,110,136,170,190 g1055,110,133,148,165 g1070,85,103,118,150 r1085,85,100,136,150 r1100,88,140,165,180 r1115,130,150,265,268 g1130,195,232,259,262 g1145,145,190,200,215 r1160,98,180,195,210 g1172,125,130,166,215 r1187,150,160,247,262 g1202,160,185,346,408 r1217,170,190,238,260 r1232,160,185,205,215 g1247,130,140,190,205 r1262,125,125,195,200 g1277,150,165,214,222`],
  [830, `g3,150,170,200,210 r16,160,175,205,210 g28,150,170,185,285 g43,150,167,190,222 r58,142,150,160,170 r73,130,136,155,168 r89,140,148,170,190 g104,125,127,160,220 r119,102,150,199,203 r134,165,185,220,222 g149,138,145,165,212 r163,130,150,172,180 r176,125,142,203,228 g191,150,155,175,195 r206,165,178,214,217 g221,105,145,175,185 g236,55,58,130,140 r250,42,80,127,150 g265,80,80,150,155 g280,18,85,115,140 r295,58,61,100,115 g310,55,64,80,100 g322,-10,-10,43,50 r337,-10,-10,43,50 r352,20,25,85,108 r367,40,50,85,95 r382,35,60,103,120 r397,50,67,232,237 r412,185,190,265,282 r427,235,259,271,323 r442,250,265,406,465 r457,270,371,376,400 r470,350,358,400,403 g484,375,436,448,460 g499,430,455,458,503 g514,430,439,490,503 r529,393,400,493,498 r544,420,455,607,636 r559,580,595,676,680 r574,640,649,694,738 r589,660,664,856,875 r604,870,880,994,1088 g616,905,1018,1036,1080 g631,935,949,967,998 g646,905,930,940,1002 g661,775,850,859,895 r676,775,811,949,985 r691,890,900,1000,1017 r706,930,949,988,992 g721,798,823,952,957 r736,787,793,850,875 g751,783,799,850,865`],
];

const AVERAGES = {
  ma20: ['#20bcbc', 1.5, [0, '8,1047 30,1000 50,972 80,965 110,980 135,1000 165,980 190,945 211,910 240,870 270,835 290,828 345,824 365,810 385,785 403,760 430,725 460,687 490,667 530,653 560,668 580,680 600,675 637,675 660,695 690,740 740,780 790,798 820,808 870,808 901,822 940,828 970,815 1000,795 1040,773 1090,775 1130,785 1160,785 1180,770'],
    [400, '0,762 50,748 100,737 140,735 175,715 215,660 260,600 300,565 320,540 357,480 390,437 420,393 455,345 490,313 515,297 550,285 570,270 590,240 625,213 680,150 730,98 770,80 835,75 870,90 920,130 950,155 997,192 1040,208 1090,213 1140,213 1180,200 1230,182'],
    [830, '0,178 60,180 130,180 230,172 300,150 330,130 380,120 430,130 450,150 490,180 520,210 550,260 580,330 600,390 620,470 650,550 680,625 700,670 725,725 752,762']],
  ma50: ['#280898', 1.5, [0, '8,1138 50,1134 80,1134 110,1142 155,1146 180,1134 210,1113 240,1095 280,1055 320,1022 350,985 400,920 450,880 490,845 530,828 580,828 620,800 660,778 710,770 800,773 850,757 900,743 980,743 1020,750 1080,753 1140,767'],
    [400, '0,775 70,782 110,777 150,773 190,762 225,733 280,693 350,655 420,613 450,587 520,530 570,492 620,450 690,373 750,318 830,255 880,220 940,203 997,193 1060,172 1170,155 1240,154'],
    [830, '0,153 80,162 130,178 180,188 250,191 310,180 350,160 390,153 440,162 500,182 570,218 600,255 650,308 690,350 752,400']],
  slow5: ['#d46468', 2.5, [0, '8,1003 20,950 35,890 50,835 65,800 79,802 94,825 109,855 124,885 139,925 154,965 166,988 181,988 196,970 211,925 226,870 241,800 256,735 271,690 286,663 301,657 313,654 328,675 343,720 358,748 373,740 388,712 403,680 418,650 433,625 448,622 475,628 520,630 535,655 550,680 565,705 580,722 595,742 610,765 660,765 675,775 690,808 705,845 720,878 735,900 754,922 769,885 784,845 799,822 810,770 825,757 840,750 855,740 875,736 890,750 905,775 920,795 935,810 950,825 965,825 980,800 995,790 1010,768 1025,755 1040,740 1060,750 1090,762 1110,765 1130,778 1150,780 1168,778 1185,755 1200,735 1220,700 1240,677 1255,700 1270,720'],
    [400, '100,705 173,705 185,685 200,630 215,550 230,490 245,430 260,390 277,365 290,375 310,387 330,387 350,375 365,355 375,325 390,297 405,292 435,302 455,270 470,245 490,215 505,180 520,165 535,178 550,190 575,187 590,175 610,145 640,85 665,50 690,5 700,-20 760,-20 775,0 790,35 805,60 820,85 835,125 850,155 865,175 880,200 895,230 910,262 925,285 937,300 952,308 967,280 982,255 997,225 1015,205 1030,190 1050,170 1070,155 1090,132 1115,132 1130,145 1150,175 1165,190 1185,200 1200,212 1245,210 1262,200'],
    [830, '0,180 45,192 75,180 100,155 150,155 170,162 210,168 230,165 265,140 290,115 320,95 345,50 370,32 395,35 410,70 430,130 445,180 460,240 475,300 495,360 515,420 540,450 560,480 590,550 600,620 610,700 620,790 635,860 650,910 665,937 680,920 690,893 725,893 740,880 752,890']],
  fast5: ['#3cc40c', 2.5, [0, '8,960 20,890 35,835 50,798 65,793 79,812 94,855 109,890 124,945 139,965 154,980 166,986 181,970 196,935 211,900 226,855 241,775 256,710 271,672 286,668 301,675 320,692 335,730 345,760 358,745 373,695 388,660 403,630 418,615 433,613 460,627 475,622 510,622 535,655 565,690 580,725 595,760 610,763 640,760 655,775 670,800 685,850 697,890 712,920 730,937 742,935 754,900 769,850 784,820 799,780 814,757 829,740 860,745 880,765 901,805 920,825 937,837 950,837 970,822 991,790 1010,768 1030,755 1070,765 1110,770 1140,780 1160,780 1183,760 1195,735 1210,715 1245,715'],
    [400, '60,728 100,708 130,712 160,708 175,670 190,590 205,530 220,460 235,410 250,385 277,368 295,380 315,390 335,380 350,360 370,310 385,297 400,305 425,315 437,312 450,275 470,240 485,215 500,192 512,182 530,200 545,200 560,188 580,178 600,140 625,95 650,60 690,5 700,-20 735,-20 750,15 775,65 800,112 820,145 850,190 865,205 877,235 895,265 915,290 937,320 955,280 975,235 997,212 1015,190 1035,175 1060,155 1085,140 1100,147 1115,175 1130,195 1155,205 1175,195 1190,195 1215,205 1240,200'],
    [830, '0,180 60,178 90,155 120,155 140,172 200,172 240,155 270,120 320,75 345,53 375,55 390,80 400,110 425,180 440,245 460,310 480,370 500,410 530,435 545,480 570,560 590,650 600,740 615,850 630,900 650,950 670,945 690,938 705,945 735,922 752,892']],
};

const STOCH_K = [[0, '8,125 20,85 35,55 50,48 65,55 79,70 94,120 109,165 124,230 139,270 154,303 166,303 181,283 211,185 226,145 241,88 256,80 271,68 286,92 301,130 313,160 328,185 346,230 358,227 373,195 388,165 403,140 418,120 433,108 448,105 475,110 490,125 505,138 520,180 535,230 550,268 565,284 580,290 595,262 610,245 622,222 637,193 652,193 667,225 682,250 697,270 712,257 727,250 742,220 754,180 769,148 784,128 799,88 814,75 829,69 859,83 874,105 889,135 901,190 916,230 931,284 946,278 961,250 976,195 991,178 1006,155 1021,135 1036,115 1051,137 1066,132 1081,134 1096,158 1108,185 1123,225 1138,250 1153,264 1168,225 1183,175 1195,148 1210,150 1225,141 1240,175 1255,209'],
  [420, '12,207 27,192 42,202 57,220 72,229 87,220 102,205 115,155 130,95 145,65 160,55 175,60 190,65 205,62 218,70 232,100 247,117 262,125 275,135 290,139 305,123 320,119 335,123 350,135 365,150 380,157 392,150 410,162 425,172 452,168 470,185 483,200 500,192 515,192 530,175 542,155 557,135 570,125 583,108 605,95 628,62 643,57 657,85 670,120 685,175 700,235 715,272 730,290 745,305 760,320 790,335 820,325 845,300 862,265 880,252 900,195 920,145 937,112 952,80 965,88 980,92 995,83 1009,72 1025,80 1040,98 1055,155 1070,205 1085,235 1100,252 1115,242 1130,232 1142,197 1160,187 1180,160 1205,130 1230,107 1245,107 1260,113'],
  [850, '0,103 30,108 42,88 60,112 74,145 90,147 104,153 115,203 130,200 145,210 160,226 175,188 190,165 205,145 220,127 235,130 250,144 263,112 280,120 295,127 310,145 325,180 338,245 352,297 370,315 385,328 410,317 440,322 465,325 480,335 510,340 530,347 550,337 590,315 605,298 630,282 647,276 660,250 677,228 692,192']];
const STOCH_D = [[0, '8,200 35,130 50,95 65,68 79,63 94,70 109,95 124,135 150,200 166,245 181,280 196,281 211,265 226,235 241,195 256,150 271,115 286,97 301,90 315,100 330,130 358,180 373,197 388,200 403,190 418,165 445,127 475,112 505,117 520,125 540,150 565,200 580,230 595,263 607,270 622,262 645,233 665,216 682,216 697,228 720,247 742,253 760,227 799,160 829,100 859,79 874,82 889,95 905,130 925,170 945,220 961,242 976,247 990,240 1010,205 1035,155 1055,137 1075,130 1096,138 1115,155 1138,185 1165,228 1180,227 1200,205 1225,165 1240,158'],
  [420, '0,168 20,182 40,197 60,207 80,215 100,216 115,205 130,180 150,130 170,92 185,70 205,61 220,65 250,85 270,103 295,126 320,126 365,131 400,148 440,164 460,168 490,183 520,190 540,185 570,168 600,130 640,85 655,82 680,92 700,130 720,185 750,250 775,305 790,332 820,330 860,308 880,282 910,225 937,175 955,130 975,103 1000,85 1030,82 1045,88 1060,103 1085,155 1110,205 1130,232 1150,232 1170,222 1200,190 1225,150 1250,118 1285,103'],
  [850, '0,105 20,108 60,104 75,108 104,125 115,150 135,175 160,200 175,206 200,193 235,155 250,147 270,130 290,126 325,133 345,180 370,240 390,290 405,316 430,322 480,322 500,330 530,340 560,344 590,330 615,308 645,293 670,267 692,244']];
const RSI = [[0, '8,435 20,432 35,437 50,432 65,450 79,460 94,482 109,471 124,484 139,472 166,485 181,460 211,446 226,448 241,440 260,438 280,442 286,458 301,470 313,463 330,465 346,458 358,449 373,438 388,442 403,454 430,454 448,447 475,450 490,465 505,454 520,457 535,483 550,487 580,501 595,469 607,500 622,476 637,488 652,504 667,512 683,542 697,512 712,484 727,508 742,487 760,473 784,465 799,465 814,472 829,463 844,475 859,475 900,496 916,487 931,498 946,476 961,478 976,458 991,478 1006,478 1021,466 1050,476 1060,471 1090,475 1110,485 1138,478 1153,481 1168,443 1183,442 1195,448 1210,466 1225,457 1240,478 1255,478'],
  [420, '0,468 10,449 27,443 40,469 57,491 70,487 85,453 100,444 115,420 127,394 208,394 230,440 255,428 275,403 325,427 365,427 378,412 390,393 405,415 420,421 452,407 467,428 482,454 495,428 525,411 540,405 553,439 570,415 590,405 628,398 643,412 657,460 670,433 685,459 700,464 715,477 730,480 745,474 760,498 790,508 806,493 818,526 835,521 847,523 862,505 878,520 892,462 920,477 937,481 960,471 985,468 1009,451 1040,472 1055,505 1070,496 1085,481 1100,480 1112,460 1127,497 1142,479 1157,493 1172,477 1187,466 1202,483 1217,472 1247,483 1288,467'],
  [850, '0,466 30,471 43,457 60,488 74,496 90,465 104,467 117,490 130,476 147,493 160,470 176,441 190,466 205,454 220,462 235,460 250,454 263,430 277,450 292,467 310,468 323,472 338,514 352,520 370,525 383,553 398,538 412,546 430,549 440,556 455,547 470,560 482,577 497,586 515,591 530,608 555,620 572,594 588,583 601,556 620,568 635,576 648,562 661,520 675,524 692,511']];
const MACD = [[0, '8,755 60,740 130,750 150,755 166,766 200,762 211,755 271,722 330,740 450,737 500,742 520,752 580,778 610,785 640,785 660,800 682,817 700,820 715,817 730,824 770,807 800,795 860,787 900,795 935,799 980,794 1021,788 1060,784 1160,789 1195,775 1250,777'],
  [420, '0,779 35,775 80,780 100,775 130,757 180,728 208,720 250,727 275,721 325,721 370,731 400,725 450,724 485,732 540,725 570,727 600,719 628,714 660,720 700,743 750,768 800,788 830,805 870,815 900,803 937,800 970,792 1000,783 1040,780 1060,788 1100,790 1150,793 1160,792'],
  [850, '0,788 150,788 200,778 240,775 265,766 300,766 320,772 360,793 400,822 470,845 515,872 555,916 585,921 648,918 670,902 692,889']];
const SIGNAL = [[0, '8,770 130,745 230,750 330,735 450,737 500,738 540,744 590,760 640,772 690,795 720,806 780,808 820,800 900,791 980,793 1160,788 1220,778'],
  [420, '0,779 100,778 140,770 180,755 215,738 300,727 480,727 570,725 628,721 680,723 750,743 800,763 850,785 880,795 937,797 1000,795 1060,787 1140,793'],
  [850, '0,789 160,788 240,778 300,773 350,776 400,798 460,818 500,835 530,850 565,880 600,898 650,908 692,900']];
const HISTOGRAM = [[0, '20,25 50,25 65,20 79,12 94,3 109,-2 124,-10 154,-14 181,-10 196,-3 211,3 241,12 271,22 290,15 301,7 316,2 343,-2 373,6 420,2 460,0 480,-2 520,-8 550,-18 580,-22 620,-16 660,-18 682,-27 700,-25 730,-20 755,-5 769,3 800,8 829,11 860,8 890,3 905,0 930,-2 960,0 980,6 1020,5 1040,3 1060,0 1160,1 1195,7 1225,5'],
  [420, '0,2 27,4 70,-3 100,4 130,20 160,25 210,22 235,13 270,8 310,8 340,3 390,-1 480,-2 570,3 628,8 660,2 700,-8 730,-18 770,-24 820,-30 860,-26 880,-20 900,-8 937,-3 960,4 1009,8 1040,6 1070,1 1200,-2'],
  [850, '100,0 160,3 200,5 235,8 263,10 290,5 325,0 340,-8 360,-15 400,-27 500,-27 530,-38 557,-43 575,-38 590,-28 610,-22 648,-13 662,0 677,6 692,16']];
const VOLUME = [[0, '20,20 35,14 50,20 65,22 79,14 94,20 109,10 124,11 139,17 154,13 166,10 181,20 196,20 211,21 226,17 241,26 256,35 271,35 286,23 301,29 313,26 328,17 343,32 358,20 373,41 388,16 403,8 418,16 433,5 448,16 460,20 475,19 490,22 505,8 520,12 535,26 550,13 565,13 580,17 595,17 607,15 622,10 637,10 652,17 667,20 682,29 697,11 712,32 727,23 742,20 754,16 769,20 784,19 799,14 814,8 829,14 844,20 859,8 874,10 889,16 901,14 916,11 931,11 946,8 961,14 976,20 991,17 1006,17 1021,13 1036,17 1051,17 1066,13 1081,17 1096,14 1108,17 1123,16 1138,25 1153,14 1168,26 1183,22 1195,20 1210,14 1225,17 1240,10 1255,14'],
  [420, '10,20 25,14 40,11 55,15 70,14 85,23 98,15 113,17 127,17 142,17 157,20 172,23 187,12 202,15 218,15 230,20 245,14 260,14 275,17 290,20 305,20 320,32 335,32 350,20 365,47 378,30 392,98 407,44 422,35 437,41 452,38 467,44 482,17 497,197 512,47 527,35 540,33 555,20 570,23 585,14 600,10 615,20 628,20 643,14 657,17 672,25 685,10 700,35 715,12 730,14 745,17 760,20 775,12 790,17 805,20 818,14 835,20 850,10 862,12 878,12 892,26 907,14 922,17 937,14 952,15 967,17 982,8 997,8 1010,8 1025,12 1040,12 1055,17 1070,12 1085,17 1100,17 1115,17 1127,14 1142,20 1157,26 1172,8 1187,12 1202,8 1217,17 1232,8 1247,10 1260,23 1275,14 1289,17'],
  [850, '14,17 28,14 43,23 58,20 74,20 89,10 104,17 117,17 130,3 147,8 160,23 176,18 190,8 205,12 220,20 235,17 250,17 263,17 277,17 292,23 307,14 323,17 338,20 352,20 370,29 383,41 398,35 412,23 428,17 440,17 455,17 470,20 484,38 499,35 514,38 529,62 544,67 557,53 572,23 587,23 601,35 616,23 632,23 647,14 661,50 677,29 692,23']];

const DAYS = [26, 60, 95, 129, 163, 198, 232, 266, 300, 335, 369, 403, 438, 473, 506, 541, 575, 609, 643, 678, 712, 747, 782, 815, 849, 884, 952, 986, 1021, 1055, 1089, 1124, 1158, 1192];
const MONTHS = [70, 168, 276, 389, 492, 599, 707, 810, 918, 1016, 1114, 1227];
const PINK = '#f4a0ac', INK = '#2a4a1a', UP = '#50c850', DOWN = '#d06860';

const num = v => Math.round(v * 100) / 100;
const points = parts => parts.flatMap(([ox, s]) => s.split(' ').map(p => { const [x, v] = p.split(',').map(Number); return [ox + x / 3, v]; }));
const curve = (parts, oy, color, w = 1) => `<polyline fill="none" stroke="${color}" stroke-width="${w}" stroke-linejoin="round" points="${points(parts).map(([x, v]) => num(x) + ',' + num(oy + v / 3)).join(' ')}"/>`;
const line = (x1, y1, x2, y2, color, w = 1, extra = '') => `<line x1="${x1}" y1="${y1}" x2="${x2}" y2="${y2}" stroke="${color}" stroke-width="${w}" ${extra}/>`;
const rule = (y, color, w = 1) => line(0, y, '110%', y, color, w);
const box = (x, y, w, h, fill, extra = '') => `<rect x="${num(x)}" y="${num(y)}" width="${w}" height="${num(h)}" fill="${fill}" ${extra}/>`;
const text = (x, y, s, cls = 'lbl', fill = '#000', extra = '') => `<text x="${x}" y="${y}" class="${cls}" fill="${fill}" ${extra}>${s}</text>`;
const arrow = (x, y, dir) => `<use href="#${dir}" x="${x - 6}" y="${y - 8}" width="12" height="16" fill="${dir === 'up' ? '#0f0' : '#f00'}"/>`;
const ring = (x, y, c) => `<circle cx="${x}" cy="${y}" r="3" fill="none" stroke="${c}"/>`;
const grid = ys => ys.map(y => rule(y + .5, '#dcdcdc')).join('')
  + DAYS.map(x => line(x + .5, 0, x + .5, 1100, '#dcdcdc')).join('')
  + MONTHS.map(x => line(x + .5, 0, x + .5, 1100, '#999')).join('')
  + line(732.5, 0, 732.5, 1100, PINK);

const candles = CANDLES.flatMap(([ox, s]) => s.split(' ').map(c => {
  const [x, high, top, bottom, low] = c.slice(1).split(',').map(Number);
  return { x: Math.floor(ox + x / 3), up: c[0] === 'g', high, top, bottom, low };
}));
const yPrice = v => Math.round(PRICE_Y + v / 3);
const candle = c => line(c.x + .5, yPrice(c.high), c.x + .5, yPrice(c.low), INK)
  + box(c.x - 1.5, yPrice(c.top) + .5, 4, Math.max(1, yPrice(c.bottom) - yPrice(c.top) - 1), c.up ? UP : DOWN, `stroke="${c.up ? '#286828' : '#5a4820'}"`);
const sample = (series, x) => {
  const i = series.findIndex(p => p[0] >= x);
  if (i < 1) return series[i === 0 ? 0 : series.length - 1][1];
  const [a, b] = [series[i - 1], series[i]];
  return a[1] + (b[1] - a[1]) * (x - a[0]) / (b[0] - a[0]);
};
const nearest = x => candles.reduce((a, b) => Math.abs(b.x - x) < Math.abs(a.x - x) ? b : a);

const priceYs = [115, 148, 182, 216, 249, 283, 317, 351, 384, 418, 452, 486, 519, 553];
const hist = points(HISTOGRAM);
const plots = {
  price: grid(priceYs) + rule(354.5, PINK)
    + text(141, 113, 'Year : High 3.185 Low 2.635', 'lbl', INK) + candles.map(candle).join('')
    + Object.values(AVERAGES).map(([c, w, ...parts]) => curve(parts, PRICE_Y, c, w)).join('')
    + line(167, 556, 1070, 217, '#187018', 2, 'stroke-dasharray="20 8"')
    + line(950, 100, 1150, 361, '#e01010', 2, 'stroke-dasharray="20 8"')
    + line(90, 261, 1089, 261, '#e01010', 2) + rule(472, '#187018', 2)
    + ring(732.5, 165, '#20509a') + arrow(1133, 315, 'down') + arrow(1060, 452, 'up')
    + text(4, 470, '2.62', 'lbl', INK) + text(5, 554, '© ProRealTime.com', 'lbl', INK) + text(106, 554, 'Data is end of day', 'lbl', INK, 'font-style="italic"'),
  stoch: grid([566, 610, 632, 676]) + rule(588, '#d84820', 2) + rule(654, '#000', 2)
    + curve(STOCH_K, LOWER_Y, '#000') + curve(STOCH_D, LOWER_Y, '#d01828') + ring(732.5, 592, '#000') + ring(732.5, 613, '#d01828') + arrow(1060, 661, 'up'),
  rsi: grid([702, 728, 754, 780]) + rule(689.5, '#3030a0') + rule(741.5, '#3030a0')
    + '<path d="M462 686h28l2 3h-32z" fill="#d0c8e8"/><path d="m1007 741 4 6 5 3 6 2 5 6 8 4 6-9 5-4 4-8zM1052 742l10 5 6-5z" fill="#c8dcc8"/>'
    + curve(RSI, LOWER_Y, '#000') + line(1035, 761, 1124, 711, '#187018', 2) + ring(732.5, 715, '#000') + arrow(1045, 770, 'up'),
  macd: grid([796, 840, 862]) + candles.map(c => {
    const h = sample(hist, c.x) / 3;
    return Math.abs(h) < .7 ? '' : box(c.x - 1, h > 0 ? 818 - h : 818, 3, Math.abs(h), h > 0 ? UP : '#d86c6c');
  }).join('') + rule(818.5, '#3030a0') + curve(SIGNAL, LOWER_Y, '#c86868') + curve(MACD, LOWER_Y, '#2828b0') + ring(732.5, 821, '#3030a0') + arrow(1070, 833, 'up'),
  volume: grid([883, 902, 920]) + points(VOLUME).map(([x, v]) => box(Math.floor(x) - 1, 939 - v / 3, 3, v / 3, Math.abs(x - 732.3) < 1 ? '#20e8e8' : nearest(x).up ? UP : '#d06868')).join('')
    + line(1031, 916, 1130, 930, '#c82020') + arrow(1070, 912, 'down'),
};

const tag = (y, w, s, color = '#000', fill = '#fff') => box(1235.5, y - 7.5, w, 14, fill, 'stroke="#000"') + text(1237, y + 4, s, 'lbl', color);
const tick = (y, s, bold) => line(1231, y + .5, 1235, y + .5, '#000') + text(1237, y + 4, s, bold ? 'lbl-b' : 'lbl');
const marker = (y, c) => `<path d="M1231 ${y - 5}l5 5-5 5z" fill="${c}"/>`;
const axes = {
  price: ['3.15', '3.1', '3.05', '3', '2.95', '2.9', '2.85', '', '2.75', '2.7', '2.65', '2.6', '2.55'].map((s, i) => tick(priceYs[i], s, s === '3')).join('')
    + tick(550, '2.5', true) + marker(172, '#d46468') + marker(169, '#3cc40c') + marker(165, '#20bcd8')
    + tag(233, 36, '2.9739', '#280898') + tag(354, 36, '2.7956', '#20bcbc') + tag(354, 29, '2.795', '#000', '#ffff20') + tag(368, 29, '2.776', '#000', '#ffc000') + tag(398, 36, '2.7306', '#3cb800'),
  stoch: tick(566, '100', true) + tick(610, '60') + tick(632, '40') + tick(676, '0', true) + marker(592, '#000') + marker(613, '#e01010')
    + tag(588, 14, '80', '#d84820') + tag(619, 36, '51.405') + tag(637, 36, '35.922', '#d01828') + tag(654, 14, '20'),
  rsi: tick(702, '60') + tick(754, '20') + tick(780, '0', true) + marker(715, '#000') + tag(694, 14, '70', '#3030a0') + tag(725, 36, '42.198') + tag(741, 14, '30', '#3030a0'),
  macd: tick(796, '0.05') + tick(818, '0') + tick(840, '-0.05') + marker(818, '#c86868') + marker(821, '#2828b0') + tag(814, 36, '0.0102', '#68b868') + tag(851, 40, '-0.0754', '#2828b0') + tag(856, 40, '-0.0856', '#c86868'),
  volume: tick(883, '60M') + tick(902, '40M') + tick(920, '20M') + marker(934, '#50c850') + tag(929, 36, '7,742K', '#000', '#ffc010'),
};

for (const row of document.querySelectorAll('.row')) {
  const name = row.classList[1], top = Number(row.dataset.top);
  row.querySelector('.draw').innerHTML = `<g transform="translate(-3 ${-top - 1})">${plots[name]}</g>`;
  row.querySelector('.axis').innerHTML = `<g transform="translate(-1231 ${-top})">${axes[name]}</g>`;
}

const DATES = '20@26 May@70 11@95 20@129 Jun@168 09@198 18@232 Jul@276 08@300 17@335 Aug@389 17@438 Sep@492 15@541 24@575 Oct@599 14@643 23@678 Nov@707 23@781 Dec@809 11@848 22@884 2010@918 13@952 22@986 Feb@1015 11@1055 22@1089 Mar@1113 12@1158 23@1192';
document.querySelector('.dates').innerHTML = '<g transform="translate(-2 -940)">' + DATES.split(' ').map(d => {
  const [s, x] = d.split('@');
  return line(+x + .5, 940, +x + .5, 944, '#000') + text(x, 955, s, s.length > 2 ? 'lbl-b' : 'lbl', '#000', 'text-anchor="middle"');
}).join('') + box(700.5, 942.5, 64, 14, '#ffff00', 'stroke="#000"') + text(732, 954, '09 Nov 2009', 'lbl', '#000', 'text-anchor="middle"') + '</g>';
```
